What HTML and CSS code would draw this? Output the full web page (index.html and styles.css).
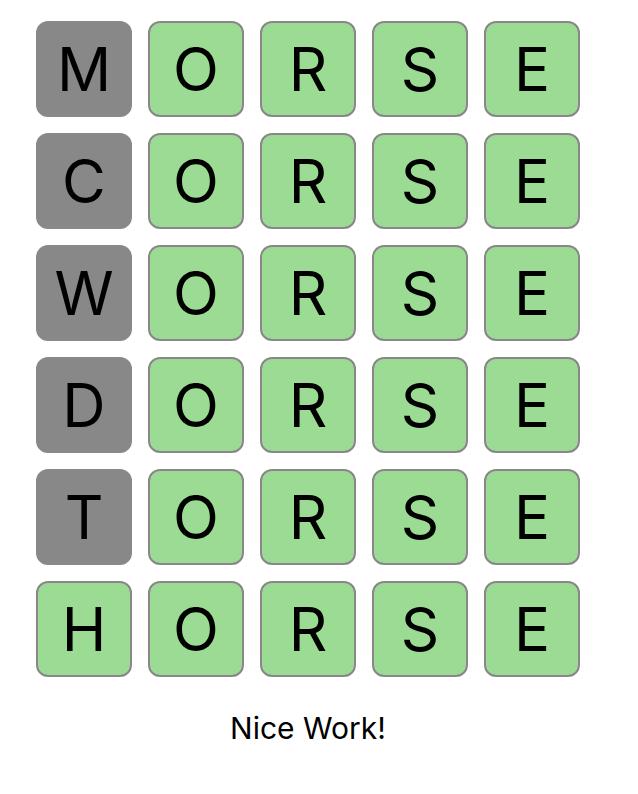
FILE: index.html
```html
<!DOCTYPE html>
<html lang="en">

<head>
  <meta charset="UTF-8">
  <meta name="viewport" content="width=device-width, initial-scale=1.0">
  <title>Wordle</title>
  <link rel="stylesheet" href="styles.css">
</head>

<body>
  <div id="game">
    <div class="board">
      <div class="tile miss">M</div>
      <div class="tile hit">O</div>
      <div class="tile hit">R</div>
      <div class="tile hit">S</div>
      <div class="tile hit">E</div>

      <div class="tile miss">C</div>
      <div class="tile hit">O</div>
      <div class="tile hit">R</div>
      <div class="tile hit">S</div>
      <div class="tile hit">E</div>

      <div class="tile miss">W</div>
      <div class="tile hit">O</div>
      <div class="tile hit">R</div>
      <div class="tile hit">S</div>
      <div class="tile hit">E</div>

      <div class="tile miss">D</div>
      <div class="tile hit">O</div>
      <div class="tile hit">R</div>
      <div class="tile hit">S</div>
      <div class="tile hit">E</div>

      <div class="tile miss">T</div>
      <div class="tile hit">O</div>
      <div class="tile hit">R</div>
      <div class="tile hit">S</div>
      <div class="tile hit">E</div>

      <div class="tile hit">H</div>
      <div class="tile hit">O</div>
      <div class="tile hit">R</div>
      <div class="tile hit">S</div>
      <div class="tile hit">E</div>
    </div>

    <p class="message">Nice Work!</p>
  </div>
</body>

</html>
```

FILE: styles.css
```css
body {
  font-family: Inter, "Liberation Sans", Arial, sans-serif;
  margin: 0;
  background-color: #fff;
  color: #000;
}

#game {
  width: 544px;
  padding: 21px 0 0 36px;
}

.board {
  display: grid;
  grid-template-columns: repeat(5, 96px);
  grid-auto-rows: 96px;
  gap: 16px;
}

.tile {
  box-sizing: border-box;
  display: flex;
  align-items: center;
  justify-content: center;
  border: 2px solid #888;
  border-radius: 12px;
  font-size: 60px;
}

.tile.hit {
  background-color: #9bdb93;
}

.tile.miss {
  background-color: #888;
}

.message {
  margin: 33px 0 0;
  text-align: center;
  font-size: 30px;
}
```
